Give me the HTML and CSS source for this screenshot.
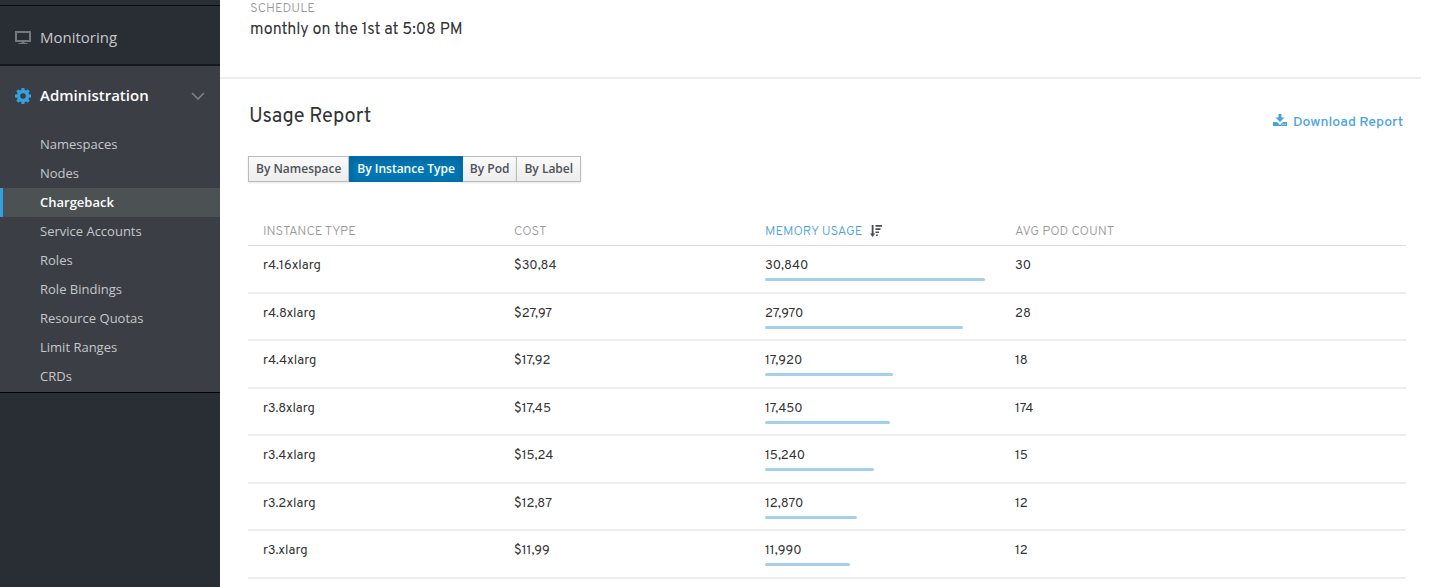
FILE: index.html
```html
<!DOCTYPE html>
<html lang="en">
<head>
<meta charset="utf-8">
<title>Chargeback</title>
<link rel="stylesheet" href="styles.css">
</head>
<body>
<div class="app">
  <nav class="sidebar" aria-label="Main">
    <a class="section" href="#">
      <svg class="section-icon" width="16" height="14" viewBox="0 0 16 14" aria-hidden="true"><path fill="#75797d" fill-rule="evenodd" d="M0 0h16v11H0zM2 2v7h12V2zM6.500 11h3v1h-3zM3.500 12h9v1h-9z"/></svg>
      <span>Monitoring</span>
    </a>
    <div class="section-open">
      <button class="section section-toggle" type="button" aria-expanded="true">
        <svg width="16" height="16" viewBox="0 0 16 16" aria-hidden="true"><path fill="#35a0dd" fill-rule="evenodd" d="M6.600 0h2.800l.4 2 1.200.5 1.700-1.200 2 2L13.500 5l.5 1.200 2 .4v2.800l-2 .4-.5 1.200 1.200 1.700-2 2L11 13.500l-1.200.5-.4 2H6.600l-.4-2-1.200-.5-1.700 1.200-2-2L2.500 11 2 9.800l-2-.4V6.600l2-.4L2.500 5 1.300 3.300l2-2L5 2.500 6.200 2zM8 5.200a2.800 2.800 0 1 0 0 5.600 2.800 2.800 0 0 0 0-5.600z"/></svg>
        <span>Administration</span>
        <svg class="chevron" width="14" height="8" viewBox="0 0 14 8" aria-hidden="true"><path fill="none" stroke="#7d8286" stroke-width="1.600" d="M1 1l6 6 6-6"/></svg>
      </button>
      <ul class="subnav">
        <li><a href="#">Namespaces</a></li>
        <li><a href="#">Nodes</a></li>
        <li><a class="active" href="#" aria-current="page">Chargeback</a></li>
        <li><a href="#">Service Accounts</a></li>
        <li><a href="#">Roles</a></li>
        <li><a href="#">Role Bindings</a></li>
        <li><a href="#">Resource Quotas</a></li>
        <li><a href="#">Limit Ranges</a></li>
        <li><a href="#">CRDs</a></li>
      </ul>
    </div>
  </nav>

  <main class="content">
    <dl class="schedule">
      <dt>SCHEDULE</dt>
      <dd>monthly on the 1st at 5:08 PM</dd>
    </dl>
    <section class="report">
      <header class="report-header">
        <h1>Usage Report</h1>
        <a class="download" href="#">
          <svg width="14" height="13" viewBox="0 0 14 13" aria-hidden="true"><path fill="#4ba3db" fill-rule="evenodd" d="M5.500 0h3v3.500h3L7 8 2.500 3.500h3zM0 8h4L7 11l3-3h4V12H0zM9.500 9.800v1h1v-1zM11.600 9.800v1h1v-1z"/></svg>
          <span>Download Report</span>
        </a>
      </header>
      <div class="group" role="group" aria-label="Group by">
        <button type="button">By Namespace</button>
        <button class="selected" type="button" aria-pressed="true">By Instance Type</button>
        <button type="button">By Pod</button>
        <button type="button">By Label</button>
      </div>
      <table class="usage">
        <thead>
          <tr>
            <th scope="col">INSTANCE TYPE</th>
            <th scope="col">COST</th>
            <th class="sorted" scope="col" aria-sort="descending">MEMORY USAGE<svg class="sort" width="12" height="12" viewBox="0 0 12 12" aria-hidden="true"><path fill="#484d52" d="M1.700 0h1.800v8.500H5.200L2.600 12 0 8.500h1.700zM5.500 0H12v1.700H5.500zM5.500 3.300h5V5h-5zM5.500 6.500H9v1.600H5.500zM6 9.600h1.800V11H6z"/></svg></th>
            <th scope="col">AVG POD COUNT</th>
          </tr>
        </thead>
        <tbody>
          <tr><td>r4.16xlarg</td><td>$30,84</td><td>30,840<div class="bar" style="width:100%"></div></td><td>30</td></tr>
          <tr><td>r4.8xlarg</td><td>$27,97</td><td>27,970<div class="bar" style="width:90%"></div></td><td>28</td></tr>
          <tr><td>r4.4xlarg</td><td>$17,92</td><td>17,920<div class="bar" style="width:58%"></div></td><td>18</td></tr>
          <tr><td>r3.8xlarg</td><td>$17,45</td><td>17,450<div class="bar" style="width:57%"></div></td><td>174</td></tr>
          <tr><td>r3.4xlarg</td><td>$15,24</td><td>15,240<div class="bar" style="width:49.500%"></div></td><td>15</td></tr>
          <tr><td>r3.2xlarg</td><td>$12,87</td><td>12,870<div class="bar" style="width:42%"></div></td><td>12</td></tr>
          <tr><td>r3.xlarg</td><td>$11,99</td><td>11,990<div class="bar" style="width:38.500%"></div></td><td>12</td></tr>
        </tbody>
      </table>
    </section>
  </main>
</div>
</body>
</html>
```
FILE: styles.css
```css
* { box-sizing: border-box; }

body {
  margin: 0;
  background: #fff;
  color: #333;
  font-family: Overpass, Roboto, sans-serif;
  font-size: 13px;
}

.app {
  display: flex;
  min-height: 100vh;
}

.sidebar {
  flex: 0 0 220px;
  padding-top: 5px;
  background: #292d34;
  font-family: "Open Sans", sans-serif;
}

.section {
  display: flex;
  align-items: center;
  gap: 9px;
  width: 100%;
  height: 61px;
  padding: 3px 15px 0;
  border: 0;
  border-top: 1px solid #0c0e11;
  border-bottom: 2px solid #15181c;
  background: none;
  color: #c5c8ca;
  font: 400 15px/20px "Open Sans", sans-serif;
  text-decoration: none;
}

.section-icon { margin-top: 2px; }

.section-open {
  padding-bottom: 1px;
  border-bottom: 1px solid #000;
  background: #3b3e45;
}

.section-toggle {
  height: 59px;
  padding-top: 0;
  border: 0;
  color: #fff;
  font-weight: 600;
}

.section-toggle span { padding-bottom: 2px; }

.chevron { margin-left: auto; }

.subnav {
  margin: 0;
  padding: 5px 0 0;
  list-style: none;
}

.subnav a {
  display: block;
  height: 29px;
  padding-left: 37px;
  border-left: 3px solid transparent;
  color: #c5c8ca;
  font-size: 13px;
  line-height: 29px;
  text-decoration: none;
}

.subnav .active {
  border-left-color: #35a0dd;
  background: #4c5154;
  color: #fff;
  font-weight: 600;
}

.content {
  flex: 1;
  min-width: 0;
  padding-right: 19px;
}

.schedule {
  margin: 0;
  padding: 0 30px 36px;
  border-bottom: 2px solid #eee;
}

.schedule dt {
  color: #999;
  font-size: 13px;
  font-weight: 300;
  line-height: 18px;
}

.schedule dd {
  margin: 0;
  padding-top: 2px;
  font-size: 16px;
  line-height: 21px;
}

.report { padding: 22px 15px 0 28px; }

.report-header {
  display: flex;
  align-items: center;
  justify-content: space-between;
  padding-right: 3px;
}

h1 {
  margin: 0;
  padding-left: 1px;
  font-size: 20px;
  font-weight: 400;
  line-height: 30px;
}

.download {
  display: flex;
  align-items: center;
  gap: 6px;
  padding-top: 12px;
  color: #4ba3db;
  font-size: 14px;
  font-weight: 500;
  line-height: 20px;
  text-decoration: none;
}

.download svg { margin-bottom: 6px; }

.group {
  display: flex;
  margin-top: 23px;
}

.group button {
  height: 26px;
  margin: 0;
  padding: 0 7px;
  border: 1px solid #bbb;
  background: linear-gradient(#fafafa, #ededed);
  box-shadow: 0 1px 2px rgba(3, 3, 3, .1);
  color: #4d5258;
  font: 600 12px/20px "Open Sans", sans-serif;
}

.group button + button { margin-left: -1px; }

.group button.selected {
  z-index: 1;
  margin-left: 0;
  border-color: #0070ab;
  background: #0077b5;
  box-shadow: inset 0 2px 8px rgba(3, 3, 3, .2);
  color: #fff;
}

.usage {
  width: 100%;
  margin-top: 36px;
  border-collapse: separate;
  border-spacing: 0;
  table-layout: fixed;
}

.usage th {
  width: 251px;
  height: 28px;
  padding: 2px 15px 0;
  border-bottom: 1px solid #ddd;
  color: #999;
  font-size: 13px;
  font-weight: 300;
  line-height: 25px;
  text-align: left;
}

.usage th:last-child { width: auto; }

.usage th.sorted {
  width: 250px;
  color: #4ba3db;
}

.sort {
  margin-left: 7px;
  vertical-align: -2px;
}

.usage td {
  height: 47px;
  padding: 10px 15px 0;
  border-bottom: 2px solid #eee;
  line-height: 20px;
  vertical-align: top;
}

.usage tr:nth-child(odd) td { height: 48px; }

.bar {
  height: 3px;
  margin-top: 2px;
  border-radius: 2px;
  background: #a3d0ec;
}
```
